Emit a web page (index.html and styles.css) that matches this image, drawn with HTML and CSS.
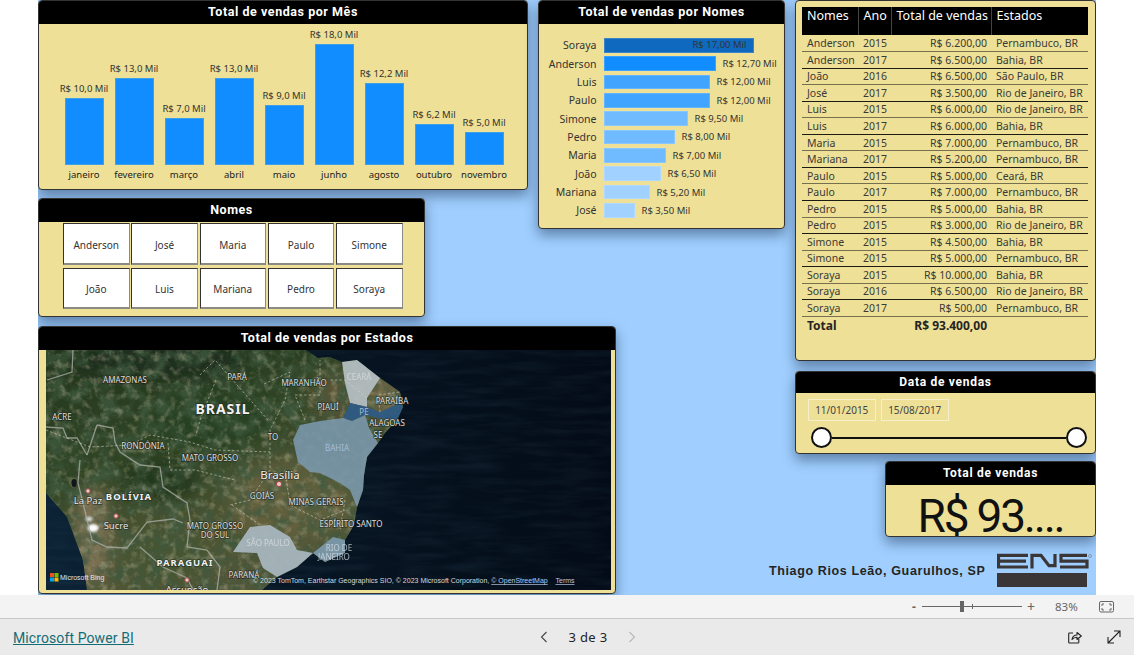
FILE: index.html
```html
<!DOCTYPE html>
<html lang="pt-BR">
<head>
<meta charset="utf-8">
<title>Relatório de vendas</title>
<link rel="stylesheet" href="styles.css">
</head>
<body>
<main class="stage">
  <div class="canvas">
    <div class="col col-left">
      <section class="card card-month">
        <h2 class="card-title">Total de vendas por Mês</h2>
        <div class="columns">
          <div class="column"><span class="val">R$ 10,0 Mil</span><div class="vbar" style="height:67px"></div><span class="axis">janeiro</span></div>
          <div class="column"><span class="val">R$ 13,0 Mil</span><div class="vbar" style="height:87px"></div><span class="axis">fevereiro</span></div>
          <div class="column"><span class="val">R$ 7,0 Mil</span><div class="vbar" style="height:47px"></div><span class="axis">março</span></div>
          <div class="column"><span class="val">R$ 13,0 Mil</span><div class="vbar" style="height:87px"></div><span class="axis">abril</span></div>
          <div class="column"><span class="val">R$ 9,0 Mil</span><div class="vbar" style="height:60px"></div><span class="axis">maio</span></div>
          <div class="column"><span class="val">R$ 18,0 Mil</span><div class="vbar" style="height:121px"></div><span class="axis">junho</span></div>
          <div class="column"><span class="val">R$ 12,2 Mil</span><div class="vbar" style="height:82px"></div><span class="axis">agosto</span></div>
          <div class="column"><span class="val">R$ 6,2 Mil</span><div class="vbar" style="height:41px"></div><span class="axis">outubro</span></div>
          <div class="column"><span class="val">R$ 5,0 Mil</span><div class="vbar" style="height:33px"></div><span class="axis">novembro</span></div>
        </div>
      </section>

      <section class="card card-names">
        <h2 class="card-title">Nomes</h2>
        <div class="name-grid">
          <button class="name-btn">Anderson</button>
          <button class="name-btn">José</button>
          <button class="name-btn">Maria</button>
          <button class="name-btn">Paulo</button>
          <button class="name-btn">Simone</button>
          <button class="name-btn">João</button>
          <button class="name-btn">Luis</button>
          <button class="name-btn">Mariana</button>
          <button class="name-btn">Pedro</button>
          <button class="name-btn">Soraya</button>
        </div>
      </section>

      <section class="card card-map">
        <h2 class="card-title">Total de vendas por Estados</h2>
        <div class="map-frame">
          <svg class="map" viewBox="46 350 565 240" width="565" height="240" aria-label="Mapa">
            <defs>
              <linearGradient id="sea" x1="0" y1="0" x2="1" y2="0">
                <stop offset="0" stop-color="#0b2234"/>
                <stop offset=".62" stop-color="#06121f"/>
                <stop offset="1" stop-color="#030b17"/>
              </linearGradient>
              <linearGradient id="landfill" x1="0" y1="0" x2=".55" y2="1">
                <stop offset="0" stop-color="#22351d"/>
                <stop offset=".42" stop-color="#304525"/>
                <stop offset=".75" stop-color="#4f5534"/>
                <stop offset="1" stop-color="#50563a"/>
              </linearGradient>
              <filter id="mottleDark" x="0" y="0" width="100%" height="100%">
                <feTurbulence type="fractalNoise" baseFrequency=".06" numOctaves="5" seed="7"/>
                <feColorMatrix type="matrix" values="0 0 0 0 .05  0 0 0 0 .1  0 0 0 0 .05  3 0 0 0 -1.2"/>
              </filter>
              <filter id="mottleLight" x="0" y="0" width="100%" height="100%">
                <feTurbulence type="fractalNoise" baseFrequency=".13" numOctaves="4" seed="21"/>
                <feColorMatrix type="matrix" values="0 0 0 0 .55  0 0 0 0 .5  0 0 0 0 .34  0 2.6 0 0 -1.25"/>
              </filter>
              <filter id="seaNoise" x="0" y="0" width="100%" height="100%">
                <feTurbulence type="fractalNoise" baseFrequency=".02 .14" numOctaves="3" seed="4"/>
                <feColorMatrix type="matrix" values="0 0 0 0 .08  0 0 0 0 .16  0 0 0 0 .24  .25 0 0 0 -.1"/>
              </filter>
              <filter id="soft"><feGaussianBlur stdDeviation="9"/></filter>
              <filter id="softer"><feGaussianBlur stdDeviation=".9"/></filter>
              <clipPath id="landclip">
                <path d="M46,350 L306,350 318,358 330,357 342,362 357,360 380,378 400,392 403,407 397,420 385,433 378,443 367,457 364,475 363,490 357,507 354,525 345,540 345,553 325,562 313,553 297,567 277,577 262,590 87,590 83,560 67,517 46,493 Z"/>
              </clipPath>
            </defs>
            <rect x="46" y="350" width="565" height="240" fill="url(#sea)"/>
            <rect x="46" y="350" width="565" height="240" filter="url(#seaNoise)"/>
            <g clip-path="url(#landclip)">
              <rect x="46" y="350" width="400" height="240" fill="url(#landfill)"/>
              <g filter="url(#soft)">
                <ellipse cx="92" cy="535" rx="16" ry="50" fill="#857658"/>
                <ellipse cx="160" cy="480" rx="40" ry="22" fill="#20391c"/>
                <ellipse cx="165" cy="555" rx="45" ry="28" fill="#475431"/>
                <ellipse cx="290" cy="500" rx="60" ry="40" fill="#64603e"/>
                <ellipse cx="335" cy="395" rx="26" ry="25" fill="#5a5534"/>
                <ellipse cx="385" cy="395" rx="20" ry="22" fill="#786a48"/>
                <ellipse cx="210" cy="420" rx="60" ry="30" fill="#263f20"/>
                <ellipse cx="160" cy="360" rx="90" ry="20" fill="#1c2f1d"/>
              </g>
              <rect x="46" y="350" width="400" height="240" filter="url(#mottleDark)" opacity=".8"/>
              <rect x="46" y="350" width="400" height="240" filter="url(#mottleLight)" opacity=".4"/>
            </g>
            <g filter="url(#softer)">
              <ellipse cx="93" cy="528" rx="5.500" ry="4" fill="#fafafa"/>
              <ellipse cx="89" cy="519" rx="3.500" ry="2.500" fill="#d4d4d0"/>
            </g>
            <ellipse cx="74" cy="483" rx="2.500" ry="4" fill="#10151c"/>

            <path class="state-ce" d="M342,362 L357,360 380,378 367,398 367,407 350,403 345,383 Z"/>
            <path class="state-pe" d="M343,418 L350,403 367,407 380,412 400,403 403,407 397,420 378,418 365,415 352,421 Z"/>
            <path class="state-ba" d="M293,440 L300,425 320,421 343,418 352,421 365,415 370,430 378,443 367,457 364,475 363,490 357,507 350,490 340,483 320,473 310,472 298,462 Z"/>
            <path class="state-sp" d="M233,552 L250,527 270,525 290,537 297,550 313,553 297,567 277,577 263,568 257,553 Z"/>
            <path class="state-rj" d="M333,537 L345,540 345,553 325,562 313,553 Z"/>

            <g class="border">
              <path d="M73,350 L72,372 47,380"/>
              <path d="M46,427 L63,428 67,438 77,438 87,455"/>
              <path d="M97,425 L113,428 115,442 120,452 140,465 160,467 163,487 187,503 190,520 187,547 207,550 220,567 217,590"/>
              <path d="M80,460 L78,483 83,503 92,540 107,547 127,548 147,522 173,519 183,523"/>
              <path d="M140,547 L163,567 187,578 193,590"/>
              <path d="M87,455 L97,425"/>
            </g>
            <g class="dash">
              <path d="M46,430 L90,447 130,445 150,435 190,442 215,450 270,452"/>
              <path d="M216,380 L200,420 196,435"/>
              <path d="M200,375 L215,360 268,420"/>
              <path d="M168,443 L170,470 195,470 235,480"/>
              <path d="M264,384 L290,372 285,400 270,430 270,470 250,500 230,505"/>
              <path d="M305,420 L295,395 320,395 320,360"/>
              <path d="M285,470 L290,505 320,520 345,510"/>
              <path d="M232,505 L260,525"/>
              <path d="M345,500 L340,530"/>
              <path d="M367,398 L345,380 330,380"/>
              <path d="M380,412 L378,395 400,392"/>
            </g>

            <circle class="cap" cx="279" cy="484" r="2.600"/>
            <circle class="cap" cx="88" cy="491" r="2.200"/>
            <circle class="cap" cx="116" cy="516" r="2.200"/>
            <circle class="cap" cx="187" cy="580" r="2.200"/>

            <g class="lbl">
              <text x="125" y="383">AMAZONAS</text>
              <text x="237" y="380">PARÁ</text>
              <text x="304" y="386">MARANHÃO</text>
              <text x="328" y="410">PIAUÍ</text>
              <text x="62" y="420">ACRE</text>
              <text x="273" y="440">TO</text>
              <text x="143" y="449">RONDÔNIA</text>
              <text x="210" y="461">MATO GROSSO</text>
              <text x="392" y="404">PARAÍBA</text>
              <text x="387" y="426">ALAGOAS</text>
              <text x="378" y="438">SE</text>
              <text x="262" y="499">GOIÁS</text>
              <text x="316" y="505">MINAS GERAIS</text>
              <text x="351" y="527">ESPÍRITO SANTO</text>
              <text x="215" y="529">MATO GROSSO</text>
              <text x="215" y="538">DO SUL</text>
              <text x="244" y="578">PARANÁ</text>
              <text class="lbl-faint" x="359" y="380">CEARÁ</text>
              <text class="lbl-blue" x="337" y="451">BAHIA</text>
              <text class="lbl-blue" x="364" y="415">PE</text>
              <text class="lbl-faint" x="268" y="546">SÃO PAULO</text>
              <text class="lbl-faint" x="339" y="551">RIO DE</text>
              <text class="lbl-faint" x="334" y="560">JANEIRO</text>
              <text class="lbl-big" x="223" y="414">BRASIL</text>
              <text class="lbl-mid" x="129" y="500">BOLÍVIA</text>
              <text class="lbl-mid" x="185" y="566">PARAGUAI</text>
              <text class="lbl-city" x="280" y="479">Brasília</text>
              <text class="lbl-city2" x="88" y="504">La Paz</text>
              <text class="lbl-city2" x="116" y="529">Sucre</text>
              <text class="lbl-city2" x="187" y="593">Assunção</text>
            </g>

            <g>
              <rect x="50" y="573" width="4" height="4" fill="#f25022"/>
              <rect x="54.500" y="573" width="4" height="4" fill="#7fba00"/>
              <rect x="50" y="577.500" width="4" height="4" fill="#00a4ef"/>
              <rect x="54.500" y="577.500" width="4" height="4" fill="#ffb900"/>
            </g>
            <text class="credit-bing" x="60" y="580">Microsoft Bing</text>
            <text class="credit" x="253" y="583">© 2023 TomTom, Earthstar Geographics SIO, © 2023 Microsoft Corporation, <tspan class="credit-link">© OpenStreetMap</tspan>  <tspan class="credit-link" dx="4">Terms</tspan></text>
          </svg>
        </div>
      </section>
    </div>

    <div class="col col-mid">
      <section class="card card-people">
        <h2 class="card-title">Total de vendas por Nomes</h2>
        <div class="hbars">
          <div class="hrow"><span class="hname">Soraya</span><div class="hbar shade-0 hbar-inside" style="width:150px"><span class="val">R$ 17,00 Mil</span></div></div>
          <div class="hrow"><span class="hname">Anderson</span><div class="hbar shade-1" style="width:112px"></div><span class="val hval">R$ 12,70 Mil</span></div>
          <div class="hrow"><span class="hname">Luis</span><div class="hbar shade-2" style="width:106px"></div><span class="val hval">R$ 12,00 Mil</span></div>
          <div class="hrow"><span class="hname">Paulo</span><div class="hbar shade-2" style="width:106px"></div><span class="val hval">R$ 12,00 Mil</span></div>
          <div class="hrow"><span class="hname">Simone</span><div class="hbar shade-3" style="width:84px"></div><span class="val hval">R$ 9,50 Mil</span></div>
          <div class="hrow"><span class="hname">Pedro</span><div class="hbar shade-3" style="width:71px"></div><span class="val hval">R$ 8,00 Mil</span></div>
          <div class="hrow"><span class="hname">Maria</span><div class="hbar shade-3" style="width:62px"></div><span class="val hval">R$ 7,00 Mil</span></div>
          <div class="hrow"><span class="hname">João</span><div class="hbar shade-4" style="width:57px"></div><span class="val hval">R$ 6,50 Mil</span></div>
          <div class="hrow"><span class="hname">Mariana</span><div class="hbar shade-4" style="width:46px"></div><span class="val hval">R$ 5,20 Mil</span></div>
          <div class="hrow"><span class="hname">José</span><div class="hbar shade-4" style="width:31px"></div><span class="val hval">R$ 3,50 Mil</span></div>
        </div>
      </section>
    </div>

    <div class="col col-right">
      <section class="card card-table">
        <table class="sales">
          <thead>
            <tr><th class="c-name">Nomes</th><th class="c-year">Ano</th><th class="c-total">Total de vendas</th><th class="c-state">Estados</th></tr>
          </thead>
          <tbody>
            <tr><td>Anderson</td><td>2015</td><td class="num">R$ 6.200,00</td><td>Pernambuco, BR</td></tr>
            <tr><td>Anderson</td><td>2017</td><td class="num">R$ 6.500,00</td><td>Bahia, BR</td></tr>
            <tr><td>João</td><td>2016</td><td class="num">R$ 6.500,00</td><td>São Paulo, BR</td></tr>
            <tr><td>José</td><td>2017</td><td class="num">R$ 3.500,00</td><td>Rio de Janeiro, BR</td></tr>
            <tr><td>Luis</td><td>2015</td><td class="num">R$ 6.000,00</td><td>Rio de Janeiro, BR</td></tr>
            <tr><td>Luis</td><td>2017</td><td class="num">R$ 6.000,00</td><td>Bahia, BR</td></tr>
            <tr><td>Maria</td><td>2015</td><td class="num">R$ 7.000,00</td><td>Pernambuco, BR</td></tr>
            <tr><td>Mariana</td><td>2017</td><td class="num">R$ 5.200,00</td><td>Pernambuco, BR</td></tr>
            <tr><td>Paulo</td><td>2015</td><td class="num">R$ 5.000,00</td><td>Ceará, BR</td></tr>
            <tr><td>Paulo</td><td>2017</td><td class="num">R$ 7.000,00</td><td>Pernambuco, BR</td></tr>
            <tr><td>Pedro</td><td>2015</td><td class="num">R$ 5.000,00</td><td>Bahia, BR</td></tr>
            <tr><td>Pedro</td><td>2015</td><td class="num">R$ 3.000,00</td><td>Rio de Janeiro, BR</td></tr>
            <tr><td>Simone</td><td>2015</td><td class="num">R$ 4.500,00</td><td>Bahia, BR</td></tr>
            <tr><td>Simone</td><td>2015</td><td class="num">R$ 5.000,00</td><td>Pernambuco, BR</td></tr>
            <tr><td>Soraya</td><td>2015</td><td class="num">R$ 10.000,00</td><td>Bahia, BR</td></tr>
            <tr><td>Soraya</td><td>2016</td><td class="num">R$ 6.500,00</td><td>Rio de Janeiro, BR</td></tr>
            <tr><td>Soraya</td><td>2017</td><td class="num">R$ 500,00</td><td>Pernambuco, BR</td></tr>
          </tbody>
          <tfoot>
            <tr><td>Total</td><td></td><td class="num">R$ 93.400,00</td><td></td></tr>
          </tfoot>
        </table>
      </section>

      <section class="card card-dates">
        <h2 class="card-title card-title-sm">Data de vendas</h2>
        <div class="date-boxes">
          <span class="date-box">11/01/2015</span>
          <span class="date-box">15/08/2017</span>
        </div>
        <div class="range"><span class="thumb"></span><span class="track"></span><span class="thumb"></span></div>
      </section>

      <section class="card card-kpi">
        <h2 class="card-title card-title-sm card-title-kpi">Total de vendas</h2>
        <div class="kpi-value">R$ 93....</div>
      </section>

      <div class="signature">
        <span class="sig-text">Thiago Rios Leão, Guarulhos, SP</span>
        <svg class="logo" width="96" height="35" viewBox="0 0 96 35" aria-label="ENS">
          <g fill="none" stroke="#3a3638" stroke-width="3.200">
            <path d="M31,2.300 H1.500 V14 H31 M1.500,8.200 H29"/>
            <path d="M35,15.500 V2.300 H44 L52,12.700 H58 V1"/>
            <path d="M90,2.300 H64 V8.200 H90 V14 H63"/>
          </g>
          <rect x="0" y="20" width="90" height="14" fill="#3a3638"/>
          <circle cx="93" cy="3" r="1.500" fill="none" stroke="#777" stroke-width=".6"/>
        </svg>
      </div>
    </div>
  </div>
</main>

<div class="zoombar">
  <span class="zb-minus">-</span>
  <span class="zb-slider"><i class="zb-thumb"></i><i class="zb-tick"></i></span>
  <span class="zb-plus">+</span>
  <span class="zb-pct">83%</span>
  <svg class="zb-fit" width="16" height="12" viewBox="0 0 16 12"><rect x=".5" y=".5" width="14" height="10.500" rx="1.500" fill="none" stroke="#666"/><path d="M3,5 V3 H5 M10,3 H12 V5 M12,7 V9 H10 M5,9 H3 V7" fill="none" stroke="#666"/></svg>
</div>

<footer class="footer">
  <a class="pbi-link" href="#">Microsoft Power BI</a>
  <nav class="pager">
    <svg width="8" height="12" viewBox="0 0 8 12"><path d="M6.500,1 L1.500,6 6.500,11" fill="none" stroke="#444" stroke-width="1.100"/></svg>
    <span class="pager-text">3 de 3</span>
    <svg width="8" height="12" viewBox="0 0 8 12"><path d="M1.500,1 L6.500,6 1.500,11" fill="none" stroke="#b8b8b8" stroke-width="1.100"/></svg>
  </nav>
  <div class="footer-icons">
    <svg width="14" height="14" viewBox="0 0 14 14"><path d="M5,3 H1.500 Q.7,3 .7,3.800 V12.200 Q.7,13 1.500,13 H10 Q10.800,13 10.800,12.200 V9" fill="none" stroke="#222" stroke-width="1.100"/><path d="M4,9.500 C4.500,6.500 6.500,5 9,5 V2.500 L13.300,6 9,9.500 V7.200 C7,7.200 5.200,8 4,9.500 Z" fill="none" stroke="#222" stroke-width="1.100" stroke-linejoin="round"/></svg>
    <svg width="14" height="14" viewBox="0 0 14 14"><path d="M1,13 L13,1 M7,1 H13 V7 M1,7 V13 H7" fill="none" stroke="#222" stroke-width="1.100"/></svg>
  </div>
</footer>
</body>
</html>
```

FILE: styles.css
```css
* { box-sizing: border-box; }
html, body { margin: 0; padding: 0; }
body {
  width: 1134px;
  height: 655px;
  overflow: hidden;
  background: #fff;
  font-family: "Noto Sans", "Open Sans", sans-serif;
  color: #252423;
}
.stage {
  height: 595px;
  padding: 0 38px;
  background: #fff;
}
.canvas {
  width: 1058px;
  height: 595px;
  background: #a0cfff;
  display: flex;
  overflow: hidden;
}
.col { display: flex; flex-direction: column; flex: none; }
.col-left { width: 500px; }
.col-mid { width: 257px; }
.col-right { width: 301px; }

.card {
  flex: none;
  background: #eee096;
  border: 1px solid #333;
  border-radius: 4px;
  overflow: hidden;
  box-shadow: 0 6px 13px rgba(10, 30, 60, .45);
}
.card-title {
  margin: 0;
  height: 23px;
  background: #000;
  color: #fff;
  font: 700 12.500px/22px Roboto, sans-serif;
  letter-spacing: .55px;
  text-align: center;
}
.card-title-sm { height: 21px; line-height: 21px; font-size: 12px; letter-spacing: .7px; }
.card-title-kpi { height: 23px; line-height: 22px; }

.val, .axis, .hname {
  font-size: 9.500px;
  line-height: 12px;
  white-space: nowrap;
  color: #333;
}

/* Monthly columns */
.card-month { width: 490px; height: 190px; }
.columns {
  display: flex;
  align-items: flex-end;
  height: 165px;
  padding: 0 0 8px 20px;
}
.column {
  width: 50px;
  display: flex;
  flex-direction: column;
  align-items: center;
  flex: none;
}
.column .val { margin-bottom: 3px; }
.vbar {
  width: 39px;
  background: #118dff;
  border: 1px solid #3f9fe8;
}
.axis { margin-top: 4px; color: #222; }

/* Names slicer */
.card-names { width: 387px; height: 119px; margin-top: 8px; }
.name-grid {
  display: grid;
  grid-template-columns: repeat(5, 66.500px);
  grid-auto-rows: 41.500px;
  column-gap: 1.750px;
  row-gap: 3px;
  padding: 1px 0 0 24px;
}
.name-btn {
  padding: 3px 0 0;
  background: #fff;
  border: 1px solid #333;
  border-right-color: #8b8b85;
  border-bottom-color: #8b8b85;
  border-bottom-width: 2px;
  font: 400 10px "Noto Sans", sans-serif;
  color: #333;
}

/* Map */
.card-map { width: 578px; height: 268px; margin-top: 9px; }
.map-frame { padding: 0 4px 0 7px; }
.map { display: block; }
.state-ce { fill: #b6c0c4; opacity: .92; }
.state-pe { fill: #2e5a86; opacity: .92; }
.state-ba { fill: #7b99ad; opacity: .88; }
.state-sp { fill: #a9b9c1; opacity: .92; }
.state-rj { fill: #7e9db3; opacity: .88; }
.border path { fill: none; stroke: #a8aca4; stroke-width: 1.300; stroke-opacity: .8; }
.dash path { fill: none; stroke: #d7d7c8; stroke-width: .8; stroke-dasharray: 2.500 2; stroke-opacity: .7; }
.cap { fill: #e8c9c4; stroke: #a8464a; stroke-width: 1; }
.lbl text {
  font: 400 8px "Noto Sans", sans-serif;
  fill: #dedede;
  text-anchor: middle;
  paint-order: stroke;
  stroke: rgba(20, 25, 20, .55);
  stroke-width: 1.500px;
}
.lbl .lbl-faint { fill: #d9e0e4; stroke: none; opacity: .75; }
.lbl .lbl-blue { fill: #a4bdd8; stroke: none; }
.lbl .lbl-big { font: 700 14px "Noto Sans", sans-serif; letter-spacing: 1px; fill: #f2f2f2; }
.lbl .lbl-mid { font: 700 9.500px "Noto Sans", sans-serif; letter-spacing: 1px; fill: #f2f2f2; }
.lbl .lbl-city { font-size: 11.500px; fill: #eee; }
.lbl .lbl-city2 { font-size: 9.500px; fill: #e8e8e8; }
.credit-bing { font: 400 7px "Liberation Sans", sans-serif; fill: #e6e6e6; }
.credit { font: 400 7px "Liberation Sans", sans-serif; fill: #d8d8d8; white-space: pre; }
.credit-link { fill: #b9c9e8; text-decoration: underline; }

/* Horizontal bars */
.card-people { width: 247px; height: 229px; }
.hbars { padding-top: 14px; display: flex; flex-direction: column; gap: 3.850px; }
.hrow { display: flex; align-items: center; height: 14.500px; }
.hname { width: 57.500px; text-align: right; margin-right: 7px; font-size: 10.500px; flex: none; }
.hbar { height: 14.500px; flex: none; border: 1px solid rgba(255, 255, 255, .18); }
.hbar-inside { display: flex; justify-content: flex-end; align-items: center; padding-right: 6px; }
.hval { margin-left: 7px; padding-top: 1px; }
.shade-0 { background: #0f6abf; }
.shade-1 { background: #118dff; }
.shade-2 { background: #41a4ff; }
.shade-3 { background: #70bbff; }
.shade-4 { background: #a0d1ff; }

/* Table */
.card-table { width: 301px; height: 361px; padding: 6px 7px 0 6px; }
.sales {
  border-collapse: collapse;
  table-layout: fixed;
  width: 286px;
  font-size: 10.500px;
  color: #3a3a36;
}
.sales th {
  height: 28px;
  padding: 0 0 11px 5px;
  background: #000;
  color: #fff;
  font-size: 12.500px;
  font-weight: 400;
  text-align: left;
  border-left: 1px solid #444;
  white-space: nowrap;
}
.sales th:first-child { border-left: 0; }
.c-name { width: 56px; }
.c-year { width: 33px; }
.c-total { width: 100px; }
.sales td {
  height: 16.550px;
  padding: 0 0 0 5px;
  white-space: nowrap;
  overflow: hidden;
  line-height: 12px;
}
.sales tbody tr { border-bottom: 1px solid #77704e; }
.sales tbody tr:nth-child(even) { border-bottom-color: #1c1c14; }
.sales td.num { text-align: right; padding: 0 4px 0 0; }
.sales tfoot td { font-weight: 700; font-size: 12px; height: 19px; color: #252423; }

/* Date slicer */
.card-dates { width: 301px; height: 83px; margin-top: 10px; }
.date-boxes { display: flex; gap: 5.500px; padding: 6px 0 0 12px; }
.date-box {
  width: 67.500px;
  height: 22px;
  border: 1px solid #f6efc9;
  font-size: 10px;
  line-height: 20px;
  text-align: center;
  color: #444;
}
.range { display: flex; align-items: center; padding: 6px 8px 0 15px; }
.thumb {
  width: 21px;
  height: 21px;
  border-radius: 50%;
  background: #fff;
  border: 2px solid #111;
  flex: none;
}
.track { flex: 1; height: 2px; background: #111; }

/* KPI */
.card-kpi { width: 211px; height: 76px; margin: 7px 0 0 90px; }
.kpi-value {
  height: 51px;
  padding-top: 11px;
  font: 400 46px/40px Roboto, sans-serif;
  letter-spacing: -2.200px;
  color: #111;
  text-align: center;
}

/* Signature */
.signature { display: flex; align-items: center; margin: 15px 0 0 -26px; height: 36px; }
.sig-text {
  font: 700 12.500px "Liberation Sans", sans-serif;
  letter-spacing: .62px;
  color: #252423;
  white-space: nowrap;
  width: 228px;
  margin-top: 2px;
}
.logo { flex: none; }

/* Zoom bar */
.zoombar {
  height: 24px;
  background: #f3f3f3;
  border-bottom: 1px solid #c8c8c8;
  display: flex;
  align-items: center;
  padding-left: 912px;
  color: #666;
  font-size: 12px;
}
.zb-minus { width: 10px; font-weight: 700; }
.zb-slider { position: relative; width: 100px; height: 1px; background: #666; }
.zb-thumb { position: absolute; left: 38px; top: -5px; width: 4px; height: 11px; background: #666; }
.zb-tick { position: absolute; left: 50px; top: -2px; width: 1px; height: 5px; background: #666; }
.zb-plus { margin-left: 5px; width: 28px; font-size: 14px; }
.zb-pct { width: 44px; font-size: 11.500px; }
.zb-fit { flex: none; }

/* Footer */
.footer {
  height: 36px;
  background: #eaeaea;
  display: flex;
  align-items: center;
  padding: 2px 13px 0 13px;
}
.pbi-link {
  width: 525px;
  flex: none;
  font-family: Roboto, sans-serif;
  font-size: 14px;
  letter-spacing: .1px;
  color: #146c75;
}
.pager { display: flex; align-items: center; width: 500px; flex: none; padding-left: 2px; margin-top: -2px; }
.pager-text { font-size: 13px; letter-spacing: .3px; color: #222; width: 80px; text-align: center; }
.footer-icons { display: flex; gap: 25px; margin-left: 30px; margin-top: -2px; }
```
